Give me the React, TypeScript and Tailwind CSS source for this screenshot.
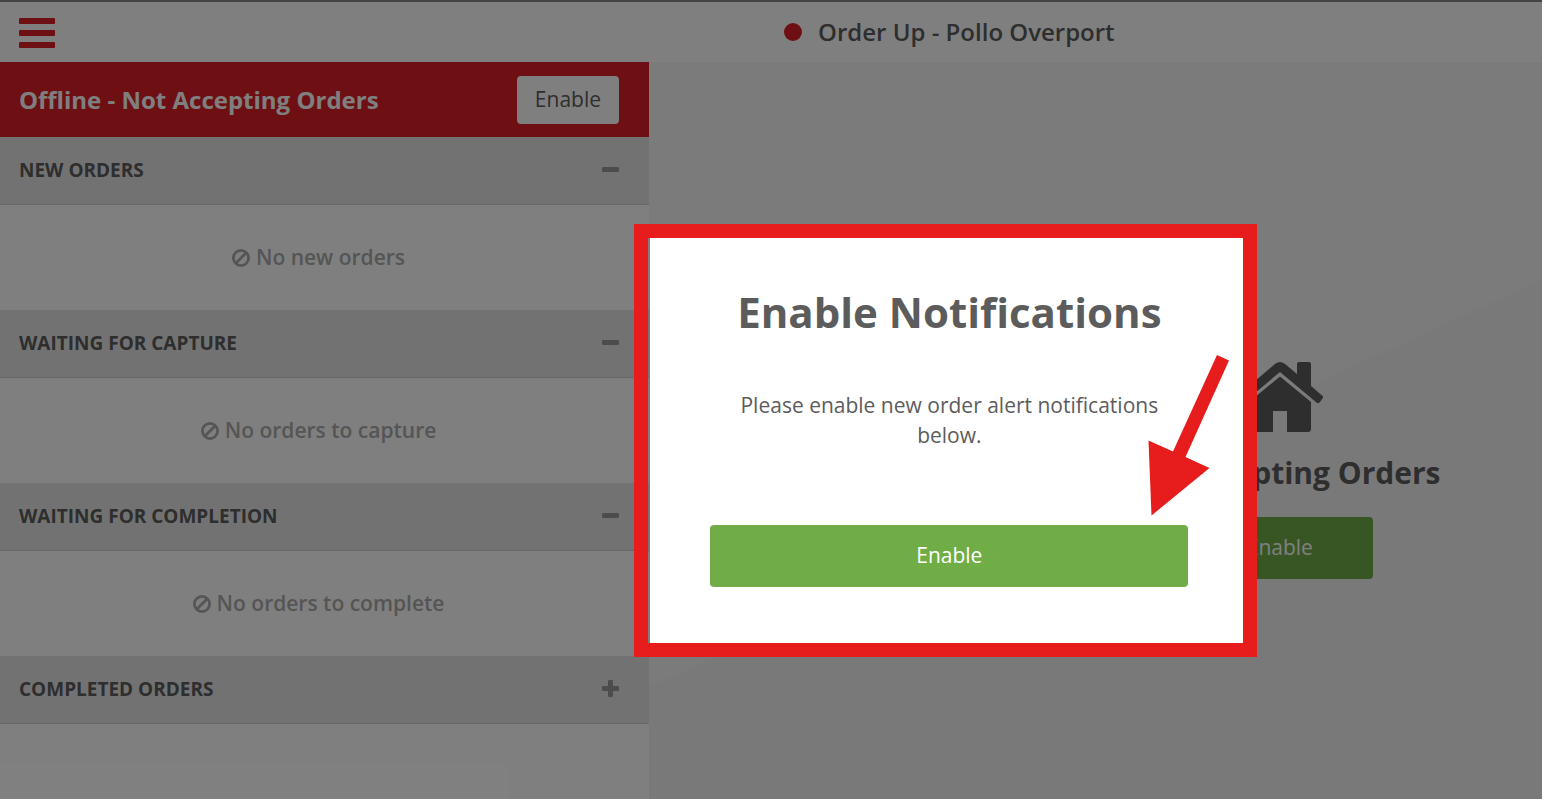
import { useState } from "react";

interface OrderSection {
	id: string;
	title: string;
	emptyText: string;
}

const sections: OrderSection[] = [
	{ id: "new", title: "NEW ORDERS", emptyText: "No new orders" },
	{ id: "capture", title: "WAITING FOR CAPTURE", emptyText: "No orders to capture" },
	{ id: "completion", title: "WAITING FOR COMPLETION", emptyText: "No orders to complete" },
	{ id: "completed", title: "COMPLETED ORDERS", emptyText: "No completed orders" },
];

export default function App() {
	return (
		<div className="h-screen w-full overflow-hidden bg-white font-['Open_Sans',sans-serif] text-[#5c5c5c]">
			<div className="relative flex h-[calc(110vh+2px)] w-[calc(123vw+2px)] flex-col">
				<Header />
				<div className="flex min-h-0 flex-1">
					<Sidebar />
					<StatusPane />
				</div>
				<NotificationModal />
			</div>
		</div>
	);
}

function Header() {
	return (
		<header className="relative flex h-[62px] shrink-0 items-center justify-center border-t-2 border-[#888888] bg-white">
			<button aria-label="Menu" className="absolute top-4 left-[19px] flex flex-col gap-1.5">
				<span className="h-1.5 w-9 rounded-[1px] bg-[#dc1e28]" />
				<span className="h-1.5 w-9 rounded-[1px] bg-[#dc1e28]" />
				<span className="h-1.5 w-9 rounded-[1px] bg-[#dc1e28]" />
			</button>
			<div className="flex items-center gap-4">
				<span className="size-[18px] rounded-full bg-[#dc1e28]" />
				<h1 className="text-2xl font-semibold">Order Up - Pollo Overport</h1>
			</div>
		</header>
	);
}

function Sidebar() {
	const [open, setOpen] = useState<string[]>(["new", "capture", "completion"]);

	const toggle = (id: string) => {
		setOpen((prev) =>
			prev.includes(id) ? prev.filter((item) => item !== id) : [...prev, id]
		);
	};

	return (
		<aside className="w-[649px] shrink-0 bg-white">
			<div className="flex h-[75px] items-center justify-between bg-[#dc1e28] pr-[30px] pl-[19px]">
				<span className="text-2xl font-bold text-white">
					Offline - Not Accepting Orders
				</span>
				<button className="h-12 rounded bg-white px-[18px] text-[21px]">Enable</button>
			</div>

			{sections.map((section) => {
				const isOpen = open.includes(section.id);

				return (
					<section key={section.id}>
						<button
							onClick={() => toggle(section.id)}
							aria-expanded={isOpen}
							className="flex h-[68px] w-full items-center justify-between border-b border-[#cecece] bg-[#e5e5e5] pr-[30px] pl-[19px]"
						>
							<span className="text-[19px] font-bold">{section.title}</span>
							<ToggleIcon open={isOpen} />
						</button>
						{isOpen && (
							<div className="flex h-[105px] items-center justify-center gap-1.5 pr-3 text-[#aaaaaa]">
								<BanIcon />
								<span className="text-[21px] font-semibold">{section.emptyText}</span>
							</div>
						)}
					</section>
				);
			})}
		</aside>
	);
}

function StatusPane() {
	return (
		<main className="flex flex-1 flex-col items-center justify-center bg-[linear-gradient(155.5deg,#f7f7f7_45%,#f2f2f2_45%)] pb-0.5 pl-3">
			<HomeIcon />
			<h2 className="mt-5 text-[30px] leading-10 font-bold">
				Not Accepting Orders
			</h2>
			<button className="mt-6 h-[62px] w-[186px] rounded bg-[#70ad46] text-[21px] text-white">
				Enable
			</button>
		</main>
	);
}

function NotificationModal() {
	return (
		<div className="absolute inset-0 flex items-center justify-center bg-black/50">
			<div
				role="dialog"
				aria-labelledby="modal-title"
				className="relative w-[598px] bg-white px-[60px] pt-[46px] pb-[58px] text-center"
			>
				<h2 id="modal-title" className="text-[42px] leading-[60px] font-bold">
					Enable Notifications
				</h2>
				<p className="mt-12 text-[21px] leading-[30px]">
					Please enable new order alert notifications below.
				</p>
				<button className="mt-[75px] h-[62px] w-full rounded bg-[#70ad46] text-[21px] text-white">
					Enable
				</button>

				{/* highlight frame and pointer */}
				<div className="pointer-events-none absolute -top-3 -right-[9px] -bottom-3 -left-4 border-[14px] border-[#e71c1c]" />
				<svg
					viewBox="0 0 82 162"
					className="pointer-events-none absolute top-[119px] right-[18px] h-[162px] w-[82px]"
					fill="#e71c1c"
				>
					<path d="M69 0 81 5.500 37.500 102 61.500 113 3.500 160.500 0.500 85.500 25 96.500Z" />
				</svg>
			</div>
		</div>
	);
}

function ToggleIcon({ open }: { open: boolean }) {
	return (
		<svg viewBox="0 0 17 20" className="h-5 w-[17px]" fill="#999999">
			<rect x="0" y="6" width="17" height="5" rx="1.200" />
			{!open && <rect x="6" y="0" width="5" height="17" rx="1.200" />}
		</svg>
	);
}

function BanIcon() {
	return (
		<svg viewBox="0 0 18 18" className="size-[18px]" fill="none" stroke="#aaaaaa" strokeWidth="2.800">
			<circle cx="9" cy="9" r="7.600" />
			<path d="M3.800 14.200 14.200 3.800" />
		</svg>
	);
}

function HomeIcon() {
	return (
		<svg viewBox="0 0 86 71" className="h-[71px] w-[86px]" fill="#5c5c5c">
			<path d="M43 14.500 74 40V67Q74 70 71 70H50V49H36V70H15Q12 70 12 67V40Z" />
			<path d="M38.500 1.500Q43 -1.500 47.500 1.500L60 12V2Q60 0 62 0H72Q74 0 74 2V24L85 33.500Q87 35 85.500 36.500L82.500 40.500Q81 42 79.500 40.500L43 10 6.500 40.500Q5 42 3.500 40.500L0.500 36.500Q-1 35 1 33.500Z" />
		</svg>
	);
}
